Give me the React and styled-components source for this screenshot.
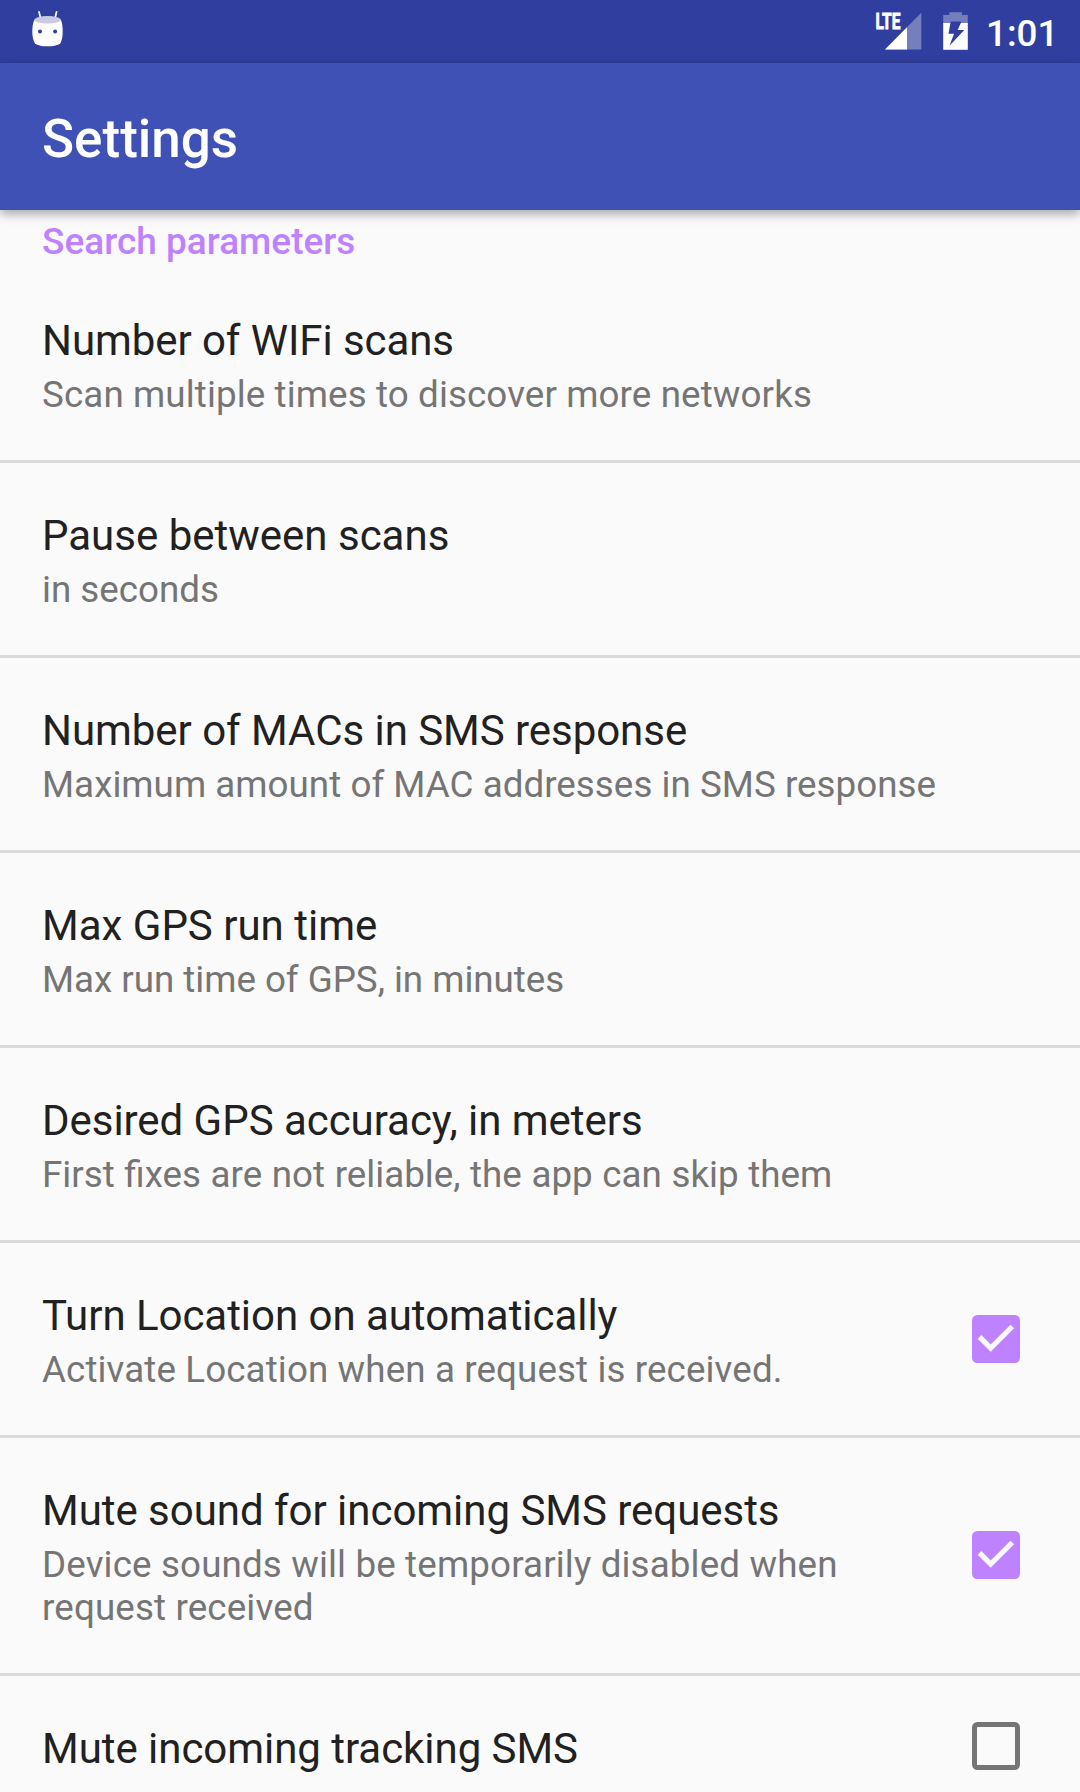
import React from "react";
import styled, { createGlobalStyle } from "styled-components";

const GlobalStyle = createGlobalStyle`
  *, *::before, *::after { box-sizing: border-box; }
  html, body { margin: 0; padding: 0; overflow: hidden; }
  body { background: #fafafa; font-family: Roboto, "Noto Sans", sans-serif; }
  svg { display: block; flex: none; }
`;

const Screen = styled.div`
  display: flex;
  flex-direction: column;
  width: 1080px;
  height: 1792px;
  overflow: hidden;
  background: #fafafa;
`;

const StatusBar = styled.header`
  display: flex;
  flex: none;
  align-items: flex-start;
  justify-content: space-between;
  height: 63px;
  padding: 0 26px 0 28px;
  background: #303f9f;
`;

const StatusIcons = styled.div`
  display: flex;
`;

const Clock = styled.time`
  width: 68px;
  margin-left: 16px;
  padding-top: 12px;
  color: #fff;
  font-size: 36.75px;
  font-weight: 500;
  line-height: 43px;
  white-space: nowrap;
`;

const AppBar = styled.div`
  display: flex;
  flex: none;
  align-items: center;
  height: 147px;
  padding: 5px 42px 0;
  background: #3f51b5;
  box-shadow: 0 4px 10px rgba(0, 0, 0, 0.34);
  z-index: 1;
`;

const AppTitle = styled.h1`
  margin: 0;
  color: #fff;
  font-size: 53px;
  font-weight: 500;
  line-height: 62px;
`;

const SettingsList = styled.main`
  display: flex;
  flex-direction: column;
  flex: 1;
  min-height: 0;
`;

const SectionHeader = styled.h2`
  flex: none;
  height: 58px;
  margin: 0;
  padding: 10px 42px 0;
  color: #be82ff;
  font-size: 37px;
  font-weight: 500;
  line-height: 43px;
`;

const Row = styled.section`
  display: flex;
  flex: none;
  align-items: center;
  justify-content: space-between;
  padding: 0 60px 0 42px;
  border-bottom: 3px solid #dbdbdb;
`;

const RowText = styled.div`
  display: flex;
  flex-direction: column;
  gap: 8px;
  max-width: ${(p) => (p.$narrow ? "846px" : "978px")};
  padding: 48px 0 ${(p) => (p.$single ? "43px" : "44px")};
`;

const RowTitle = styled.div`
  color: #212121;
  font-size: 42px;
  letter-spacing: ${(p) => p.$tracking || 0}px;
  line-height: 49px;
  white-space: nowrap;
`;

const Summary = styled.div`
  color: #757575;
  font-size: 36.75px;
  letter-spacing: ${(p) => p.$tracking || 0}px;
  word-spacing: ${(p) => p.$wordGap || 0}px;
  line-height: 43px;
`;

const CheckBox = styled.span`
  display: flex;
  flex: none;
  width: 48px;
  height: 48px;
  margin-bottom: 0.5px;
  border: ${(p) => (p.$checked ? "0" : "5.5px solid #757575")};
  border-radius: 5.5px;
  background: ${(p) => (p.$checked ? "#be82ff" : "transparent")};
`;

const RobotIcon = () => (
  <svg width="40" height="63" viewBox="28 0 40 63">
    <path d="M39 11.8 L41 20 M56.6 11.8 L54.6 20" stroke="#fff" strokeWidth="1.7" strokeLinecap="round" />
    <path
      d="M34.5 19.5 C40 23.5 56 23.5 60.8 19.5 Q62.7 24 62.7 31.5 Q62.7 39 60.4 43.2 C57 47.3 38 47.3 34.9 43.2 Q32.3 39 32.3 31.5 Q32.3 24 34.5 19.5Z"
      fill="#fff"
    />
    <ellipse cx="47.6" cy="19.8" rx="13.2" ry="3.7" fill="#c7cbe6" />
    <circle cx="40" cy="31.5" r="2" fill="#303f9f" />
    <circle cx="55.1" cy="31.5" r="2" fill="#303f9f" />
  </svg>
);

const SignalIcon = () => (
  <svg width="50" height="63" viewBox="874 0 50 63">
    <path d="M921.3 12.8 V49.5 H885Z" fill="#757fbd" />
    <path d="M907 27.2 V49.5 H885Z" fill="#fff" />
    <text
      x="875.4"
      y="29.1"
      fill="#fff"
      stroke="#fff"
      strokeWidth="0.8"
      fontFamily="Roboto, sans-serif"
      fontSize="21.8"
      fontWeight="700"
      textLength="25"
      lengthAdjust="spacingAndGlyphs"
    >
      LTE
    </text>
  </svg>
);

const BatteryIcon = () => (
  <svg width="46" height="63" viewBox="924 0 46 63">
    <path d="M943.2 23 V15 H949.3 V12.3 H962 V15 H967.8 V23Z" fill="#757fbd" />
    <path d="M943.2 23 H967.8 V49.8 H943.2Z" fill="#fff" />
    <path d="M950.7 21.5 H961.5 L957.7 30 H964.3 L949.5 45.7 L954 33.8 H948.5Z" fill="#303f9f" />
  </svg>
);

const CheckMark = () => (
  <svg width="48" height="48" viewBox="0 0 48 48">
    <path d="M7.5 21.9 L18.7 33.1 L40.3 11.5" fill="none" stroke="#fafafa" strokeWidth="5.2" />
  </svg>
);

const settings = [
  {
    title: "Number of WIFi scans",
    titleTracking: -0.07,
    summary: "Scan multiple times to discover more networks",
    summaryTracking: 0.11,
  },
  { title: "Pause between scans", summary: "in seconds" },
  {
    title: "Number of MACs in SMS response",
    titleTracking: -0.04,
    summary: "Maximum amount of MAC addresses in SMS response",
    summaryTracking: 0.03,
  },
  { title: "Max GPS run time", summary: "Max run time of GPS, in minutes", summaryTracking: -0.03 },
  {
    title: "Desired GPS accuracy, in meters",
    titleTracking: -0.04,
    summary: "First fixes are not reliable, the app can skip them",
    wordGap: 0.5,
  },
  {
    title: "Turn Location on automatically",
    titleTracking: -0.04,
    summary: "Activate Location when a request is received.",
    summaryTracking: 0.11,
    checked: true,
  },
  {
    title: "Mute sound for incoming SMS requests",
    titleTracking: -0.03,
    summary: "Device sounds will be temporarily disabled when request received",
    summaryTracking: 0.14,
    checked: true,
  },
  { title: "Mute incoming tracking SMS", titleTracking: -0.04, checked: false },
];

function Setting({ title, titleTracking, summary, summaryTracking, wordGap, checked }) {
  const hasBox = checked !== undefined;
  return (
    <Row>
      <RowText $narrow={hasBox} $single={!summary}>
        <RowTitle $tracking={titleTracking}>{title}</RowTitle>
        {summary && (
          <Summary $tracking={summaryTracking} $wordGap={wordGap}>
            {summary}
          </Summary>
        )}
      </RowText>
      {hasBox && (
        <CheckBox role="checkbox" aria-checked={checked} $checked={checked}>
          {checked && <CheckMark />}
        </CheckBox>
      )}
    </Row>
  );
}

export default function App() {
  return (
    <>
      <GlobalStyle />
      <Screen>
        <StatusBar>
          <RobotIcon />
          <StatusIcons>
            <SignalIcon />
            <BatteryIcon />
            <Clock>1:01</Clock>
          </StatusIcons>
        </StatusBar>
        <AppBar>
          <AppTitle>Settings</AppTitle>
        </AppBar>
        <SettingsList>
          <SectionHeader>Search parameters</SectionHeader>
          {settings.map((s) => (
            <Setting key={s.title} {...s} />
          ))}
        </SettingsList>
      </Screen>
    </>
  );
}
